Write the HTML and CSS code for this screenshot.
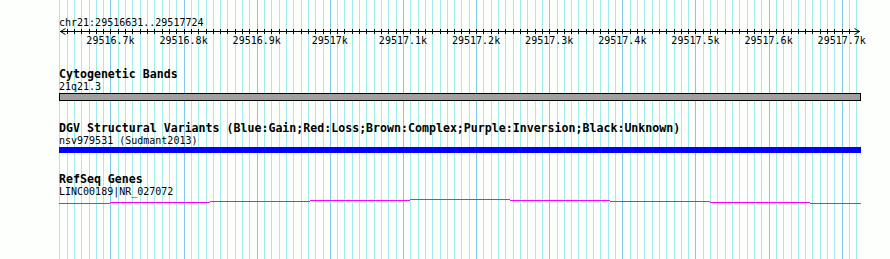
FILE: index.html
```html
<!DOCTYPE html>
<html lang="en">
<head>
<meta charset="utf-8">
<title>chr21:29516631..29517724</title>
<link rel="stylesheet" href="styles.css">
</head>
<body>
<div class="panel">
  <svg class="grid" width="890" height="259" viewBox="0 0 890 259" aria-hidden="true">
    <path class="grid-minor" d="M59.5 0V259M67.5 0V259M74.5 0V259M81.5 0V259M89.5 0V259M96.5 0V259M103.5 0V259M118.5 0V259M125.5 0V259M132.5 0V259M140.5 0V259M147.5 0V259M154.5 0V259M162.5 0V259M169.5 0V259M176.5 0V259M191.5 0V259M198.5 0V259M206.5 0V259M213.5 0V259M220.5 0V259M227.5 0V259M235.5 0V259M242.5 0V259M249.5 0V259M264.5 0V259M271.5 0V259M279.5 0V259M286.5 0V259M293.5 0V259M301.5 0V259M308.5 0V259M315.5 0V259M323.5 0V259M337.5 0V259M344.5 0V259M352.5 0V259M359.5 0V259M366.5 0V259M374.5 0V259M381.5 0V259M388.5 0V259M396.5 0V259M410.5 0V259M418.5 0V259M425.5 0V259M432.5 0V259M440.5 0V259M447.5 0V259M454.5 0V259M461.5 0V259M469.5 0V259M483.5 0V259M491.5 0V259M498.5 0V259M505.5 0V259M513.5 0V259M520.5 0V259M527.5 0V259M535.5 0V259M542.5 0V259M557.5 0V259M564.5 0V259M571.5 0V259M578.5 0V259M586.5 0V259M593.5 0V259M600.5 0V259M608.5 0V259M615.5 0V259M630.5 0V259M637.5 0V259M644.5 0V259M652.5 0V259M659.5 0V259M666.5 0V259M674.5 0V259M681.5 0V259M688.5 0V259M703.5 0V259M710.5 0V259M717.5 0V259M725.5 0V259M732.5 0V259M739.5 0V259M747.5 0V259M754.5 0V259M761.5 0V259M776.5 0V259M783.5 0V259M791.5 0V259M798.5 0V259M805.5 0V259M812.5 0V259M820.5 0V259M827.5 0V259M834.5 0V259M849.5 0V259M856.5 0V259"/>
    <path class="grid-major" d="M110.5 0V259M184.5 0V259M257.5 0V259M330.5 0V259M403.5 0V259M476.5 0V259M549.5 0V259M622.5 0V259M695.5 0V259M769.5 0V259M842.5 0V259"/>
  </svg>

  <div class="content">
    <div class="ruler">
      <div class="range">chr21:29516631..29517724</div>
      <svg class="axis" width="890" height="7" viewBox="0 0 890 7" aria-hidden="true">
        <path class="axis-line" d="M60 3.5H860"/>
        <path class="axis-ticks" d="M67.5 1V6M74.5 1V6M81.5 1V6M89.5 1V6M96.5 1V6M103.5 1V6M110.5 1V6M118.5 1V6M125.5 1V6M132.5 1V6M140.5 1V6M147.5 1V6M154.5 1V6M162.5 1V6M169.5 1V6M176.5 1V6M184.5 1V6M191.5 1V6M198.5 1V6M206.5 1V6M213.5 1V6M220.5 1V6M227.5 1V6M235.5 1V6M242.5 1V6M249.5 1V6M257.5 1V6M264.5 1V6M271.5 1V6M279.5 1V6M286.5 1V6M293.5 1V6M301.5 1V6M308.5 1V6M315.5 1V6M323.5 1V6M330.5 1V6M337.5 1V6M344.5 1V6M352.5 1V6M359.5 1V6M366.5 1V6M374.5 1V6M381.5 1V6M388.5 1V6M396.5 1V6M403.5 1V6M410.5 1V6M418.5 1V6M425.5 1V6M432.5 1V6M440.5 1V6M447.5 1V6M454.5 1V6M461.5 1V6M469.5 1V6M476.5 1V6M483.5 1V6M491.5 1V6M498.5 1V6M505.5 1V6M513.5 1V6M520.5 1V6M527.5 1V6M535.5 1V6M542.5 1V6M549.5 1V6M557.5 1V6M564.5 1V6M571.5 1V6M578.5 1V6M586.5 1V6M593.5 1V6M600.5 1V6M608.5 1V6M615.5 1V6M622.5 1V6M630.5 1V6M637.5 1V6M644.5 1V6M652.5 1V6M659.5 1V6M666.5 1V6M674.5 1V6M681.5 1V6M688.5 1V6M695.5 1V6M703.5 1V6M710.5 1V6M717.5 1V6M725.5 1V6M732.5 1V6M739.5 1V6M747.5 1V6M754.5 1V6M761.5 1V6M769.5 1V6M776.5 1V6M783.5 1V6M791.5 1V6M798.5 1V6M805.5 1V6M812.5 1V6M820.5 1V6M827.5 1V6M834.5 1V6M842.5 1V6M849.5 1V6"/>
        <path class="axis-arrow" d="M65.5 0.5L60.5 3.5L65.5 6.5M854.5 0.5L859.5 3.5L854.5 6.5"/>
      </svg>
      <div class="scale">
        <span>29516.7k</span><span>29516.8k</span><span>29516.9k</span><span>29517k</span><span>29517.1k</span><span>29517.2k</span><span>29517.3k</span><span>29517.4k</span><span>29517.5k</span><span>29517.6k</span><span>29517.7k</span>
      </div>
    </div>

    <section class="track track-cyto">
      <h2 class="track-title">Cytogenetic Bands</h2>
      <div class="feature-label">21q21.3</div>
      <div class="band"></div>
    </section>

    <section class="track track-dgv">
      <h2 class="track-title">DGV Structural Variants (Blue:Gain;Red:Loss;Brown:Complex;Purple:Inversion;Black:Unknown)</h2>
      <div class="feature-label">nsv979531 (Sudmant2013)</div>
      <div class="cnv"></div>
    </section>

    <section class="track track-refseq">
      <h2 class="track-title">RefSeq Genes</h2>
      <div class="feature-label">LINC00189|NR_027072</div>
      <svg class="gene" width="890" height="6" viewBox="0 0 890 6" aria-hidden="true">
        <path d="M59 5.5H110M110 4.5H210M210 3.5H310M310 2.5H410M410 1.5H510M510 2.5H610M610 3.5H710M710 4.5H810M810 5.5H861"/>
      </svg>
    </section>
  </div>
</div>
</body>
</html>
```

FILE: styles.css
```css
html,
body {
  margin: 0;
  padding: 0;
  background: #fcfffc;
}

.panel {
  position: relative;
  width: 890px;
  height: 259px;
  overflow: hidden;
  font-family: "DejaVu Sans Mono", "Liberation Mono", monospace;
  color: #000;
}

.grid {
  position: absolute;
  left: 0;
  top: 0;
  shape-rendering: crispEdges;
}

.grid-minor {
  stroke: #a4ecec;
  stroke-width: 1;
  fill: none;
}

.grid-major {
  stroke: #80c8e8;
  stroke-width: 1;
  fill: none;
}

.content {
  position: relative;
  padding-top: 17px;
}

.range {
  padding-left: 59px;
  font-size: 10px;
  line-height: 11px;
}

.axis {
  display: block;
}

.axis-line,
.axis-ticks {
  stroke: #000;
  stroke-width: 1;
  fill: none;
  shape-rendering: crispEdges;
}

.axis-arrow {
  stroke: #000;
  stroke-width: 1;
  fill: none;
}

.scale {
  display: flex;
  margin-left: 73.9px;
  font-size: 10px;
  line-height: 11px;
  white-space: nowrap;
}

.scale span {
  flex: 0 0 73.126px;
  text-align: center;
}

.track-cyto {
  margin-top: 22px;
}

.track-dgv {
  margin-top: 21px;
}

.track-refseq {
  margin-top: 20px;
}

.track-title {
  margin: 0;
  padding-left: 59px;
  font-size: 11.6px;
  line-height: 13px;
  font-weight: bold;
  white-space: nowrap;
}

.feature-label {
  padding-left: 59px;
  font-size: 10px;
  line-height: 11px;
  white-space: nowrap;
}

.band {
  margin: 1px 0 0 59px;
  width: 800px;
  height: 6px;
  border: 1px solid #000;
  background: #a0a0a0;
}

.cnv {
  margin: 1px 0 0 59px;
  width: 802px;
  height: 6px;
  background: #0000ff;
}

.gene {
  display: block;
  margin-top: 1px;
  shape-rendering: crispEdges;
}

.gene path {
  stroke: #ff00ff;
  stroke-width: 1;
  fill: none;
}
```
